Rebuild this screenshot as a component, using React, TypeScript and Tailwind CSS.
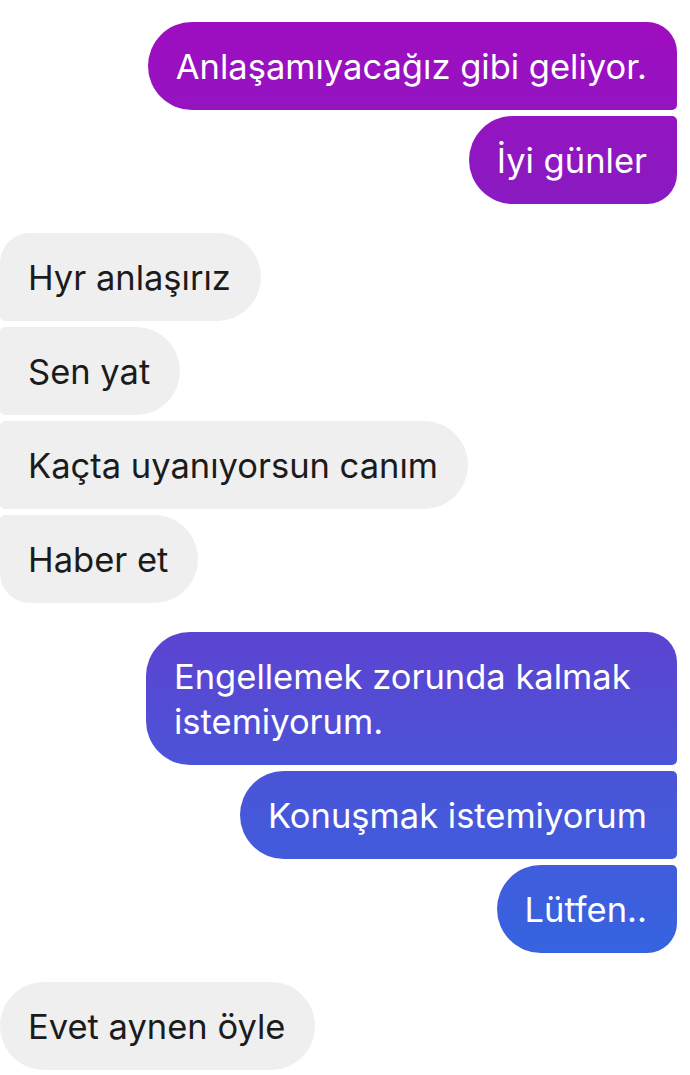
import React from 'react';

type Pos = 'single' | 'first' | 'middle' | 'last';

const outGroups: string[][] = [
  ['Anlaşamıyacağız gibi geliyor.', 'İyi günler'],
  ['Engellemek zorunda kalmak istemiyorum.', 'Konuşmak istemiyorum', 'Lütfen..'],
];

const inGroups: string[][] = [
  ['Hyr anlaşırız', 'Sen yat', 'Kaçta uyanıyorsun canım', 'Haber et'],
  ['Evet aynen öyle'],
];

function posOf(i: number, n: number): Pos {
  if (n === 1) return 'single';
  if (i === 0) return 'first';
  if (i === n - 1) return 'last';
  return 'middle';
}

const outCorners: Record<Pos, string> = {
  single: 'rounded-[44px]',
  first: 'rounded-l-[44px] rounded-tr-[30px] rounded-br-[5px]',
  middle: 'rounded-l-[44px] rounded-r-[5px]',
  last: 'rounded-l-[44px] rounded-tr-[5px] rounded-br-[30px]',
};

const inCorners: Record<Pos, string> = {
  single: 'rounded-[44px]',
  first: 'rounded-r-[44px] rounded-tl-[30px] rounded-bl-[5px]',
  middle: 'rounded-r-[44px] rounded-l-[5px]',
  last: 'rounded-r-[44px] rounded-tl-[5px] rounded-bl-[30px]',
};

function Outgoing({ texts }: { texts: string[] }) {
  return (
    <div className="flex flex-col items-end gap-[6px] pr-[13px]">
      {texts.map((t, i) => (
        <div
          key={t}
          className={`max-w-[531px] pl-[28px] pr-[30px] pt-[22px] pb-[21px] text-[34.5px] leading-[45px] text-white bg-fixed bg-[linear-gradient(to_bottom,#a20bc0_0px,#9a10c0_60px,#8a1ac1_200px,#5b44d2_640px,#4a55d8_780px,#3564e0_960px,#2f6ae2_1075px)] ${outCorners[posOf(i, texts.length)]}`}
        >
          {t}
        </div>
      ))}
    </div>
  );
}

function Incoming({ texts }: { texts: string[] }) {
  return (
    <div className="flex flex-col items-start gap-[6px]">
      {texts.map((t, i) => (
        <div
          key={t}
          className={`pl-[28px] pr-[30px] pt-[22px] pb-[21px] text-[34.5px] leading-[45px] text-[#1b1b1b] bg-[#efefef] ${inCorners[posOf(i, texts.length)]}`}
        >
          {t}
        </div>
      ))}
    </div>
  );
}

export default function App() {
  return (
    <div className="w-[690px] h-[1075px] bg-white overflow-hidden font-['Inter',sans-serif]">
      <div className="flex flex-col gap-[29px] pt-[22px]">
        <Outgoing texts={outGroups[0]} />
        <Incoming texts={inGroups[0]} />
        <Outgoing texts={outGroups[1]} />
        <Incoming texts={inGroups[1]} />
      </div>
    </div>
  );
}
